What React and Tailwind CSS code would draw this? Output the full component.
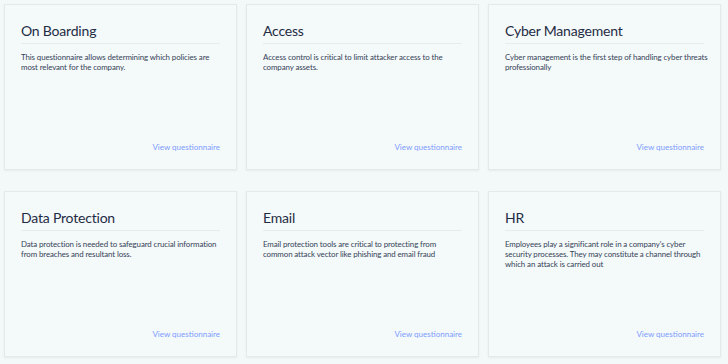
const cards = [
  {
    title: 'On Boarding',
    lines: ['This questionnaire allows determining which policies are', 'most relevant for the company.'],
  },
  {
    title: 'Access',
    lines: ['Access control is critical to limit attacker access to the', 'company assets.'],
  },
  {
    title: 'Cyber Management',
    lines: ['Cyber management is the first step of handling cyber threats', 'professionally'],
  },
  {
    title: 'Data Protection',
    lines: ['Data protection is needed to safeguard crucial information', 'from breaches and resultant loss.'],
  },
  {
    title: 'Email',
    lines: ['Email protection tools are critical to protecting from', 'common attack vector like phishing and email fraud'],
  },
  {
    title: 'HR',
    lines: [
      "Employees play a significant role in a company's cyber",
      'security processes. They may constitute a channel through',
      'which an attack is carried out',
    ],
  },
];

function QuestionnaireCard({ title, lines }) {
  return (
    <div className="h-[166px] bg-[#f4f9fa] border border-[#e4e9eb] shadow-[0_1px_2px_rgba(0,0,0,0.06)] pl-4 pr-4 pt-[16px] pb-[17px] flex flex-col">
      <h2 className="text-[14px] leading-[20px] tracking-[-0.2px] text-[#1f2c44] border-b border-[#e6ebee] pb-[2px]">
        {title}
      </h2>
      <p className="mt-[8px] text-[7.9px] leading-[10px] tracking-[-0.1px] text-[#354257]">
        {lines.map((line) => (
          <span key={line} className="block whitespace-nowrap">
            {line}
          </span>
        ))}
      </p>
      <div className="mt-auto flex justify-end">
        <a href="#" className="text-[8px] leading-[10px] text-[#7d9cff]">
          View questionnaire
        </a>
      </div>
    </div>
  );
}

export default function App() {
  return (
    <div
      className="w-[728px] h-[364px] bg-[#f3f8f9] pl-[4px] pt-[4px] overflow-hidden"
      style={{ fontFamily: 'Lato, "Open Sans", sans-serif' }}
    >
      <div className="grid grid-cols-[233px_233px_233px] gap-x-[9px] gap-y-[21px]">
        {cards.map((c) => (
          <QuestionnaireCard key={c.title} title={c.title} lines={c.lines} />
        ))}
      </div>
    </div>
  );
}
